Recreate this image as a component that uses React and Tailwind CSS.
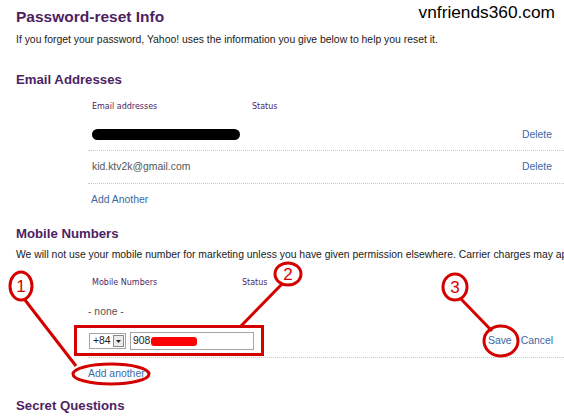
import React from "react";

const F = { fontFamily: '"Liberation Sans", Arial, sans-serif' };
const H = { fontFamily: '"DejaVu Sans", Verdana, sans-serif' };

function Annotations() {
  return (
    <svg className="absolute left-0 top-0 pointer-events-none" width="564" height="416" viewBox="0 0 564 416" fill="none">
      <g stroke="#d40000" strokeWidth="3" fill="none">
        <rect x="75.5" y="326.5" width="187" height="28" />
        <ellipse cx="21" cy="286" rx="11" ry="14" />
        <line x1="25" y1="300" x2="76" y2="366" />
        <ellipse cx="111" cy="374" rx="38" ry="10" />
        <ellipse cx="288" cy="274" rx="13" ry="11" />
        <line x1="282" y1="284" x2="241" y2="326" />
        <ellipse cx="455" cy="287" rx="12" ry="13" />
        <line x1="461" y1="299" x2="492" y2="331" />
        <ellipse cx="501" cy="341" rx="17" ry="15" />
      </g>
      <g fill="#d40000" fontFamily="Liberation Sans, Arial, sans-serif" fontSize="17" textAnchor="middle">
        <text x="21" y="292">1</text>
        <text x="288" y="280">2</text>
        <text x="455" y="293">3</text>
      </g>
    </svg>
  );
}

export default function App() {
  return (
    <div className="relative w-[564px] h-[416px] overflow-hidden bg-white" style={F}>
      <div className="pl-[16px]">
        <div className="flex items-start justify-between">
          <h1 className="mt-[7px] text-[15.5px] leading-[20px] font-bold text-[#4e1f63]">Password-reset Info</h1>
          <div className="mt-[2px] mr-[9px] text-[17.3px] leading-[20px] text-black">vnfriends360.com</div>
        </div>
        <p className="mt-[6px] text-[10.4px] leading-[14px] text-[#1a1a1a] whitespace-nowrap">
          If you forget your password, Yahoo! uses the information you give below to help you reset it.
        </p>

        <h2 className="mt-[24px] text-[13.2px] leading-[17px] font-bold text-[#4e1f63]">Email Addresses</h2>

        <div className="ml-[72px] mt-[11px]">
          <div className="flex h-[16px] items-center pl-[4px] text-[8px] text-[#4e1f63]" style={H}>
            <span className="w-[160px]">Email addresses</span>
            <span>Status</span>
          </div>
          <div className="flex h-[36px] items-center justify-between border-b border-dotted border-[#c8c8c8] pl-[4px] pr-[12px] pt-[4px]">
            <span className="block h-[11px] w-[148px] rounded-full bg-black"></span>
            <span className="text-[10.4px] text-[#3b6aa3]">Delete</span>
          </div>
          <div className="flex h-[33px] items-center justify-between border-b border-dotted border-[#c8c8c8] pl-[4px] pr-[12px]">
            <span className="text-[10.4px] text-[#555]">kid.ktv2k@gmail.com</span>
            <span className="text-[10.4px] text-[#3b6aa3]">Delete</span>
          </div>
          <div className="flex h-[32px] items-center pl-[3px] text-[10.4px] text-[#3b6aa3]">Add Another</div>
        </div>

        <h2 className="mt-[9px] text-[13.2px] leading-[17px] font-bold text-[#4e1f63]">Mobile Numbers</h2>
        <p className="mt-[6px] text-[10.4px] leading-[14px] text-[#1a1a1a] whitespace-nowrap">
          We will not use your mobile number for marketing unless you have given permission elsewhere. Carrier charges may apply.
        </p>

        <div className="ml-[72px] mt-[13px]">
          <div className="flex h-[16px] items-center pl-[4px] text-[8px] text-[#4e1f63]" style={H}>
            <span className="w-[150px]">Mobile Numbers</span>
            <span>Status</span>
          </div>
          <div className="flex h-[34px] items-center pt-[8px] text-[10.4px] text-[#555]">- none -</div>
          <div className="flex h-[33px] items-center justify-between border-b border-dotted border-[#c8c8c8] pr-[11px]">
            <div className="flex items-center gap-[4px] pl-[1px]">
              <div className="flex h-[16px] w-[37px] items-center justify-between border border-[#a5a5a5] pl-[3px] pr-[1px] text-[10.4px] text-[#222]">
                <span>+84</span>
                <span className="flex h-[12px] w-[11px] items-center justify-center border border-[#8a8a8a] bg-[#ececec]">
                  <svg width="5" height="3" viewBox="0 0 5 3"><path d="M0 0h5L2.5 3z" fill="#222" /></svg>
                </span>
              </div>
              <div className="flex h-[18px] w-[124px] items-center border border-[#a5a5a5] pl-[2px] text-[10.4px] text-[#222]">
                <span>908</span>
                <span className="ml-[1px] block h-[9px] w-[46px] rounded-[3px] bg-[#ff0000]"></span>
              </div>
            </div>
            <div className="flex gap-[9px] text-[10.4px] text-[#3b6aa3]">
              <span>Save</span>
              <span>Cancel</span>
            </div>
          </div>
          <div className="flex h-[32px] items-center text-[10.4px] text-[#3b6aa3]">Add another</div>
        </div>

        <h2 className="mt-[7px] text-[13.2px] leading-[17px] font-bold text-[#4e1f63]">Secret Questions</h2>
      </div>
      <Annotations />
    </div>
  );
}
